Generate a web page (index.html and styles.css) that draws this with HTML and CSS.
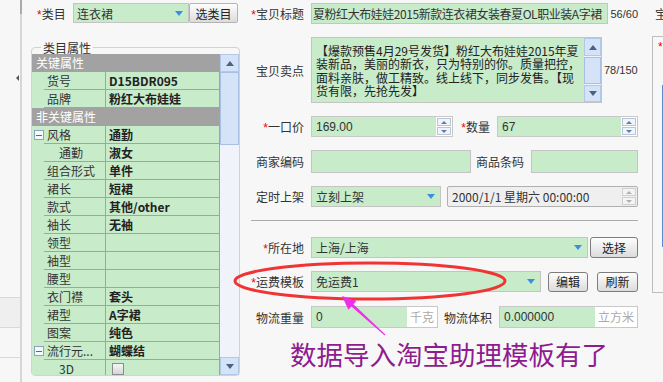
FILE: index.html
```html
<!DOCTYPE html>
<html lang="zh-CN">
<head>
    <meta charset="UTF-8">
    <title>宝贝编辑</title>
    <link rel="stylesheet" href="styles.css">
</head>
<body>
<div class="page">
    <div class="side-strip">
        <span class="strip-top"></span>
        <span class="collapse"></span>
        <span class="strip-row first"></span>
        <span class="strip-row shade"></span>
        <span class="strip-row"></span>
    </div>

    <div class="left-col">
        <div class="cat-row">
            <span class="cat-label"><i class="req">*</i>类目</span>
            <div class="select cat-select">连衣裙<span class="arrow"></span></div>
            <button class="btn cat-btn">选类目</button>
        </div>
        <fieldset class="props">
            <legend>类目属性</legend>
            <div class="props-box">
                <div class="props-list">
                    <div class="group">关键属性</div>
                    <div class="prop"><span class="tree"></span><span class="name">货号</span><span class="val">D15BDR095</span></div>
                    <div class="prop"><span class="tree"></span><span class="name">品牌</span><span class="val">粉红大布娃娃</span></div>
                    <div class="group">非关键属性</div>
                    <div class="prop"><span class="tree"><span class="toggle"></span></span><span class="name">风格</span><span class="val">通勤</span></div>
                    <div class="prop child"><span class="tree"></span><span class="name">通勤</span><span class="val">淑女</span></div>
                    <div class="prop"><span class="tree"></span><span class="name">组合形式</span><span class="val">单件</span></div>
                    <div class="prop"><span class="tree"></span><span class="name">裙长</span><span class="val">短裙</span></div>
                    <div class="prop"><span class="tree"></span><span class="name">款式</span><span class="val">其他/other</span></div>
                    <div class="prop"><span class="tree"></span><span class="name">袖长</span><span class="val">无袖</span></div>
                    <div class="prop"><span class="tree"></span><span class="name">领型</span><span class="val"></span></div>
                    <div class="prop"><span class="tree"></span><span class="name">袖型</span><span class="val"></span></div>
                    <div class="prop"><span class="tree"></span><span class="name">腰型</span><span class="val"></span></div>
                    <div class="prop"><span class="tree"></span><span class="name">衣门襟</span><span class="val">套头</span></div>
                    <div class="prop"><span class="tree"></span><span class="name">裙型</span><span class="val">A字裙</span></div>
                    <div class="prop"><span class="tree"></span><span class="name">图案</span><span class="val">纯色</span></div>
                    <div class="prop"><span class="tree"><span class="toggle"></span></span><span class="name">流行元...</span><span class="val">蝴蝶结</span></div>
                    <div class="prop child"><span class="tree"></span><span class="name">3D</span><span class="val"><span class="check"></span></span></div>
                </div>
                <div class="vscroll">
                    <span class="sb-btn"><span class="tri-up"></span></span>
                    <span class="sb-thumb"></span>
                    <span class="sb-btn down"><span class="tri-down"></span></span>
                </div>
            </div>
        </fieldset>
    </div>

    <div class="form">
        <div class="row">
            <span class="lbl"><i class="req">*</i>宝贝标题</span>
            <input class="txt title" value="夏粉红大布娃娃2015新款连衣裙女装春夏OL职业装A字裙">
            <span class="count">56/60</span>
        </div>
        <div class="row tall">
            <span class="lbl">宝贝卖点</span>
            <div class="textarea">
                <div class="ta-text">【爆款预售4月29号发货】粉红大布娃娃2015年夏<br>装新品，美丽的新衣，只为特别的你。质量把控，<br>面料亲肤，做工精致。线上线下，同步发售。【现<br>货有限，先抢先发】</div>
                <div class="ta-scroll">
                    <span class="sb-btn"><span class="tri-up"></span></span>
                    <span class="sb-thumb"></span>
                    <span class="sb-btn down"><span class="tri-down"></span></span>
                </div>
            </div>
            <span class="count">78/150</span>
        </div>
        <div class="row">
            <span class="lbl"><i class="req">*</i>一口价</span>
            <div class="spin price">
                <input class="txt num" value="169.00">
                <span class="spin-btns"><span class="up"></span><span class="dn"></span></span>
            </div>
            <span class="lbl-mid"><i class="req">*</i>数量</span>
            <div class="spin qty">
                <input class="txt num" value="67">
                <span class="spin-btns"><span class="up"></span><span class="dn"></span></span>
            </div>
        </div>
        <div class="row codes">
            <span class="lbl">商家编码</span>
            <input class="txt code-a" value="">
            <span class="lbl-mid">商品条码</span>
            <input class="txt code-b" value="">
        </div>
        <div class="row">
            <span class="lbl">定时上架</span>
            <div class="select time-select">立刻上架<span class="arrow"></span></div>
            <div class="date">2000/1/1 星期六 00:00:00<span class="spin-btns gray"><span class="up"></span><span class="dn"></span></span></div>
        </div>
        <div class="divider"></div>
        <div class="row">
            <span class="lbl"><i class="req">*</i>所在地</span>
            <div class="select loc-select">上海/上海<span class="arrow"></span></div>
            <button class="btn pick-btn">选择</button>
        </div>
        <div class="row freight">
            <span class="lbl"><i class="req">*</i>运费模板</span>
            <div class="select freight-select">免运费1<span class="arrow"></span></div>
            <button class="btn edit-btn">编辑</button>
            <button class="btn refresh-btn">刷新</button>
        </div>
        <div class="row logistics">
            <span class="lbl">物流重量</span>
            <div class="unit-field weight">
                <input class="txt num" value="0">
                <span class="unit">千克</span>
            </div>
            <span class="lbl-mid">物流体积</span>
            <div class="unit-field volume">
                <input class="txt num" value="0.000000">
                <span class="unit">立方米</span>
            </div>
        </div>
        <div class="note">数据导入淘宝助理模板有了</div>
    </div>

    <div class="next-panel">
        <div class="np-title">宝贝</div>
        <div class="np-box">
            <div class="np-req">*</div>
            <div class="np-bar"></div>
        </div>
    </div>

    <svg class="marks" width="663" height="382" viewBox="0 0 663 382">
        <ellipse cx="370" cy="281" rx="135" ry="18" fill="none" stroke="#f03434" stroke-width="3"/>
        <polygon points="342,296 356.4,301 353.4,304.3 385.3,334.6 384.7,335.4 351.4,306.5 348.4,309.8" fill="#ee2ee8"/>
    </svg>
</div>
</body>
</html>
```

FILE: styles.css
```css
* {
    box-sizing: border-box;
}
body {
    margin: 0;
    background-color: #f7f7f7;
    color: #333;
    font-family: "Noto Sans CJK SC", "Liberation Sans", sans-serif;
    font-size: 12px;
    overflow: hidden;
}
.page {
    position: relative;
    display: flex;
    width: 663px;
    height: 382px;
    overflow: hidden;
}

/* 左侧折叠条 */
.side-strip {
    display: flex;
    flex-direction: column;
    align-items: flex-end;
    flex-shrink: 0;
    width: 22px;
    border-right: 2px solid #d6d6d6;
}
.strip-top {
    width: 2px;
    height: 14px;
    margin-right: -2px;
    background-color: #ababab;
}
.collapse {
    margin-top: 61px;
    margin-right: 1px;
    border-top: 3px solid transparent;
    border-bottom: 3px solid transparent;
    border-right: 3px solid #555;
}
.strip-row {
    width: 100%;
    height: 30px;
    border-bottom: 1px solid #d9d9d9;
}
.strip-row.first {
    margin-top: 187px;
}
.strip-row.shade {
    background-color: #efefef;
}

/* 类目 */
.left-col {
    flex-shrink: 0;
    width: 218px;
    padding: 3px 0 0 9px;
}
.cat-row {
    display: flex;
    align-items: center;
    height: 20px;
}
.cat-label {
    width: 36px;
    margin-left: 6px;
    white-space: nowrap;
}
.req {
    color: #e00;
    font-style: normal;
    font-family: "Liberation Sans", sans-serif;
}
.select {
    display: flex;
    align-items: center;
    height: 21px;
    padding-left: 4px;
    border: 1px solid #c4c4c4;
    background-color: #c8ebca;
    color: #333;
    white-space: nowrap;
}
.cat-select {
    width: 116px;
    height: 20px;
    padding-left: 3px;
}
.arrow {
    margin-left: auto;
    margin-right: 5px;
    border-left: 4px solid transparent;
    border-right: 4px solid transparent;
    border-top: 5px solid #3b8fe0;
}
.btn {
    height: 21px;
    padding: 0;
    border: 1px solid #7d7d7d;
    border-radius: 3px;
    background: linear-gradient(#fdfdfd, #dcdcdc);
    color: #222;
    font: inherit;
}
.cat-btn {
    width: 49px;
    height: 20px;
    border-color: #b3b3b3;
    border-radius: 2px;
}

/* 类目属性 */
.props {
    width: 209px;
    min-width: 0;
    margin: 18px 0 0;
    padding: 0;
    border: 1px solid #d2d2d2;
    border-radius: 4px;
}
.props legend {
    margin-left: 9px;
    padding: 0 2px;
    line-height: 13px;
}
.props-box {
    display: flex;
    height: 321px;
    overflow: hidden;
}
.props-list {
    width: 188px;
    border-right: 1px solid #a3a3a3;
    background-color: #c8ebca;
}
.group {
    height: 18px;
    padding-left: 4px;
    line-height: 18px;
    background-color: #a2a2a2;
    color: #fff;
}
.prop {
    display: flex;
    height: 18px;
    line-height: 17px;
}
.tree {
    display: flex;
    align-items: center;
    flex-shrink: 0;
    width: 12px;
}
.toggle {
    display: flex;
    align-items: center;
    justify-content: center;
    width: 10px;
    height: 10px;
    margin-left: 2px;
    border: 1px solid #8aa2c4;
    background-color: #f6f9fc;
}
.toggle::after {
    content: "";
    width: 6px;
    height: 1px;
    background-color: #4f6b8f;
}
.name {
    flex-shrink: 0;
    width: 62px;
    padding-left: 3px;
    border-right: 1px solid #a3a3a3;
    border-bottom: 1px solid #a3a3a3;
    white-space: nowrap;
    overflow: hidden;
}
.prop.child .name {
    padding-left: 15px;
}
.val {
    flex: 1;
    padding-left: 3px;
    border-bottom: 1px solid #a3a3a3;
    font-weight: bold;
    color: #222;
    white-space: nowrap;
}
.check {
    display: inline-block;
    width: 12px;
    height: 12px;
    margin: 3px 0 0 3px;
    border: 1px solid #8c8c8c;
    background: linear-gradient(#f6f6f6, #d6d6d6);
    vertical-align: top;
}

/* 滚动条 */
.vscroll {
    display: flex;
    flex-direction: column;
    width: 19px;
    background-color: #f0f3f9;
}
.sb-btn {
    display: flex;
    align-items: center;
    justify-content: center;
    flex-shrink: 0;
    height: 18px;
    border: 1px solid #b3c7e6;
    background-color: #d4e3f7;
}
.sb-btn.down {
    margin-top: auto;
}
.sb-thumb {
    flex-shrink: 0;
    height: 73px;
    border: 1px solid #a9c0e4;
    background-color: #d4e3f7;
}
.tri-up {
    border-left: 4px solid transparent;
    border-right: 4px solid transparent;
    border-bottom: 5px solid #4d6185;
}
.tri-down {
    border-left: 4px solid transparent;
    border-right: 4px solid transparent;
    border-top: 5px solid #4d6185;
}

/* 右侧表单 */
.form {
    flex-shrink: 0;
    width: 412px;
    padding-top: 3px;
}
.row {
    display: flex;
    align-items: center;
    width: 398px;
    height: 21px;
    margin-bottom: 13px;
}
.lbl {
    flex-shrink: 0;
    width: 64px;
    margin-right: 7px;
    text-align: right;
    white-space: nowrap;
}
.lbl-mid {
    flex: 1;
    margin-right: 7px;
    text-align: right;
    white-space: nowrap;
}
.txt {
    height: 21px;
    padding: 0 4px;
    border: 1px solid #c4c4c4;
    background-color: #c8ebca;
    color: #333;
    font: inherit;
    outline: none;
}
.txt.num {
    font-family: "Liberation Sans", sans-serif;
}
.title {
    width: 298px;
    padding: 0 1px;
    letter-spacing: -0.45px;
}
.count {
    margin-left: 2px;
    font-family: "Liberation Sans", sans-serif;
    font-size: 11px;
    white-space: nowrap;
}
.row.tall {
    height: 66px;
}
.textarea {
    display: flex;
    width: 291px;
    height: 66px;
    border: 1px solid #c4c4c4;
    background-color: #c8ebca;
}
.ta-text {
    flex: 1;
    padding: 6px 0 0 4px;
    line-height: 13.33px;
    white-space: nowrap;
    overflow: hidden;
    color: #222;
}
.ta-scroll {
    display: flex;
    flex-direction: column;
    gap: 1px;
    width: 17px;
    background-color: #f0f3f9;
}
.ta-scroll .sb-thumb {
    height: 27px;
}
.ta-scroll .sb-btn.down {
    height: 17px;
}

.spin {
    display: flex;
    height: 21px;
    border: 1px solid #c8c8c8;
    background-color: #fff;
}
.spin .txt {
    flex: 1;
    min-width: 0;
    height: 100%;
    border: none;
}
.price {
    width: 142px;
}
.qty {
    width: 141px;
}
.spin-btns {
    display: flex;
    flex-direction: column;
    justify-content: center;
    gap: 1px;
    width: 16px;
    padding: 0 1px;
}
.spin-btns span {
    display: flex;
    align-items: center;
    justify-content: center;
    height: 8px;
    border: 1px solid #b9c5d8;
    background-color: #f1f4f9;
}
.spin-btns .up::after {
    content: "";
    border-left: 3px solid transparent;
    border-right: 3px solid transparent;
    border-bottom: 3px solid #5b7db0;
}
.spin-btns .dn::after {
    content: "";
    border-left: 3px solid transparent;
    border-right: 3px solid transparent;
    border-top: 3px solid #5b7db0;
}
.spin-btns.gray span {
    border-color: #cfcfcf;
    background-color: #f4f4f4;
}
.spin-btns.gray .up::after {
    border-bottom-color: #b0b0b0;
}
.spin-btns.gray .dn::after {
    border-top-color: #b0b0b0;
}

.row.codes {
    height: 23px;
}
.codes .txt {
    height: 23px;
}
.code-a {
    width: 160px;
}
.code-b {
    width: 107px;
}
.time-select {
    width: 130px;
}
.date {
    display: flex;
    align-items: center;
    width: 191px;
    height: 21px;
    margin-left: auto;
    padding-left: 4px;
    border: 1px solid #b0b0b0;
    border-radius: 2px;
    background-color: #efefef;
    white-space: nowrap;
}
.date .spin-btns {
    margin-left: auto;
}
.divider {
    width: 387px;
    height: 1px;
    margin: 0 0 16px 11px;
    background-color: #ababab;
}
.loc-select {
    flex: 1;
}
.pick-btn {
    width: 48px;
    margin-left: 2px;
}
.row.freight {
    margin-bottom: 14px;
}
.freight-select {
    width: 230px;
}
.edit-btn {
    width: 40px;
    height: 20px;
    margin-left: 7px;
}
.refresh-btn {
    width: 41px;
    height: 20px;
    margin-left: 9px;
}
.row.logistics {
    height: 22px;
    margin-bottom: 12px;
}
.unit-field {
    display: flex;
    height: 22px;
    border: 1px solid #c8c8c8;
}
.unit-field .txt {
    flex: 1;
    min-width: 0;
    height: 100%;
    border: none;
}
.weight {
    width: 127px;
}
.volume {
    width: 139px;
}
.unit {
    padding: 0 3px;
    background-color: #fff;
    color: #aaa;
    line-height: 20px;
    white-space: nowrap;
}
.note {
    margin-left: 50px;
    font-size: 26.5px;
    line-height: 27px;
    color: #8e1c8e;
    white-space: nowrap;
}

/* 右侧被截断的面板 */
.next-panel {
    flex-shrink: 0;
    width: 40px;
    padding-top: 3px;
}
.np-title {
    height: 21px;
    padding-left: 3px;
    line-height: 21px;
    white-space: nowrap;
}
.np-box {
    height: 257px;
    margin-top: 12px;
    padding: 4px 0 0 5px;
    border: 1px solid #bdbdbd;
    border-right: none;
}
.np-req {
    line-height: 13px;
    color: #e00;
    font-family: "Liberation Sans", sans-serif;
}
.np-bar {
    width: 4px;
    height: 162px;
    margin: 31px 0 0 4px;
    background-color: #5a8ccc;
}

/* 标注 */
.marks {
    position: absolute;
    top: 0;
    left: 0;
    pointer-events: none;
}
```
